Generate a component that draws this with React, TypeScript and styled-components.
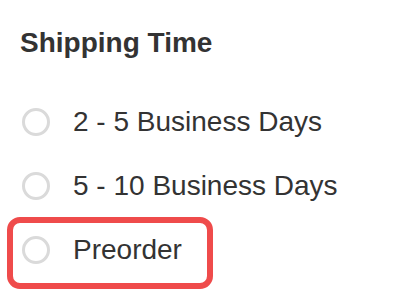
import React from "react";
import styled, { createGlobalStyle } from "styled-components";

const Global = createGlobalStyle`
  html, body { margin: 0; padding: 0; background: #ffffff; }
  body { font-family: "Liberation Sans", Arial, Helvetica, sans-serif; color: #333333; }
`;

const Panel = styled.section`
  width: 394px;
  height: 302px;
  padding-top: 27px;
  box-sizing: border-box;
  overflow: hidden;
`;

const Title = styled.h2`
  margin: 0 0 31px 20px;
  font-size: 28px;
  line-height: 32px;
  font-weight: 700;
  color: #333333;
`;

const List = styled.div`
  display: flex;
  flex-direction: column;
`;

const Row = styled.label<{ $highlight?: boolean }>`
  position: relative;
  display: flex;
  align-items: center;
  gap: 23px;
  height: 64px;
  padding-left: 22px;
  font-size: 28px;
  line-height: 32px;
  color: #333333;
  cursor: pointer;

  ${(p) =>
    p.$highlight &&
    `
    &::after {
      content: "";
      position: absolute;
      left: 7px;
      top: -1px;
      width: 206px;
      height: 72px;
      box-sizing: border-box;
      border: 6px solid #ef4b4b;
      border-radius: 13px;
      pointer-events: none;
    }
  `}
`;

const Radio = styled.span`
  flex: none;
  width: 28px;
  height: 28px;
  box-sizing: border-box;
  border: 3.5px solid #dadada;
  border-radius: 50%;
  background: #ffffff;
`;

const options = [
  { label: "2 - 5 Business Days" },
  { label: "5 - 10 Business Days" },
  { label: "Preorder", highlight: true },
];

export default function App() {
  return (
    <>
      <Global />
      <Panel>
        <Title>Shipping Time</Title>
        <List>
          {options.map((o) => (
            <Row key={o.label} $highlight={o.highlight}>
              <Radio />
              <span>{o.label}</span>
            </Row>
          ))}
        </List>
      </Panel>
    </>
  );
}
